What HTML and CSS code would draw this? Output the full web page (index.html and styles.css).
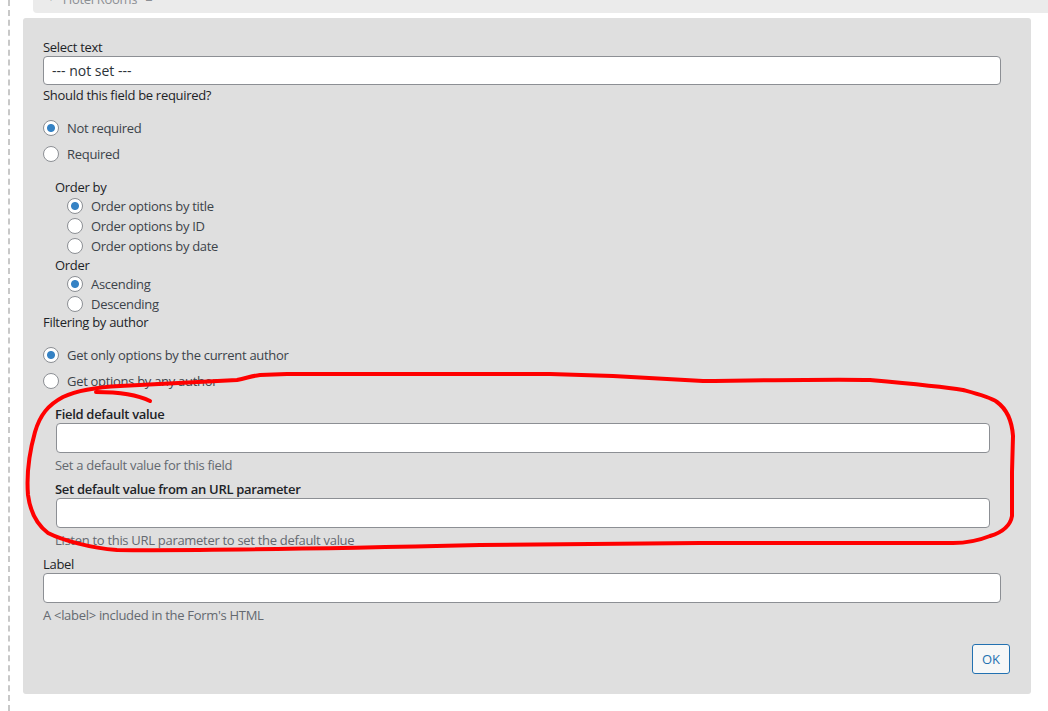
FILE: index.html
```html
<!DOCTYPE html>
<html lang="en">
<head>
    <meta charset="UTF-8">
    <meta name="viewport" content="width=device-width, initial-scale=1.0">
    <title>Hotel Rooms - field settings</title>
    <link rel="stylesheet" href="styles.css">
</head>
<body>

<div class="layout">
    <!-- Collapsed field header -->
    <div class="field-bar">
        <span class="field-bar-arrow">&#9660;</span>
        <span class="field-bar-title">Hotel Rooms</span>
        <span class="field-bar-handle">&#61;</span>
    </div>

    <!-- Field options panel -->
    <div class="panel">
        <div class="fields">
            <label class="label" for="selectText">Select text</label>
            <select class="input select" id="selectText">
                <option>--- not set ---</option>
            </select>

            <div class="label label-tight">Should this field be required?</div>
            <div class="radio-list">
                <label class="radio-row"><input type="radio" name="required" checked> Not required</label>
                <label class="radio-row"><input type="radio" name="required"> Required</label>
            </div>

            <div class="sub-block">
                <div class="label">Order by</div>
                <div class="radio-list compact">
                    <label class="radio-row"><input type="radio" name="orderBy" checked> Order options by title</label>
                    <label class="radio-row"><input type="radio" name="orderBy"> Order options by ID</label>
                    <label class="radio-row"><input type="radio" name="orderBy"> Order options by date</label>
                </div>
                <div class="label">Order</div>
                <div class="radio-list compact">
                    <label class="radio-row"><input type="radio" name="order" checked> Ascending</label>
                    <label class="radio-row"><input type="radio" name="order"> Descending</label>
                </div>
            </div>

            <div class="label">Filtering by author</div>
            <div class="radio-list">
                <label class="radio-row"><input type="radio" name="author" checked> Get only options by the current author</label>
                <label class="radio-row"><input type="radio" name="author"> Get options by any author</label>
            </div>

            <div class="sub-block defaults">
                <label class="label strong" for="defaultValue">Field default value</label>
                <input class="input" type="text" id="defaultValue">
                <div class="help">Set a default value for this field</div>

                <label class="label strong" for="urlParam">Set default value from an URL parameter</label>
                <input class="input" type="text" id="urlParam">
                <div class="help">Listen to this URL parameter to set the default value</div>
            </div>

            <label class="label" for="fieldLabel">Label</label>
            <input class="input" type="text" id="fieldLabel">
            <div class="help">A &lt;label&gt; included in the Form's HTML</div>
        </div>

        <div class="panel-footer">
            <button class="ok-btn">OK</button>
        </div>
    </div>

    <!-- hand-drawn highlight around the default value settings -->
    <svg class="scribble" width="1048" height="711" viewBox="0 0 1048 711">
        <path d="M150 401 C 138 395 118 392 96 392"/>
        <path d="M287 374 L 550 374 L 613 376 L 703 381 C 780 380 840 379 870 380 C 915 384 945 387 963 390 C 978 394 990 397 997 402 C 1008 410 1012 422 1013 436 L 1012 472 L 1012 516 C 1010 528 1000 533 990 536 C 980 540 965 543 953 543 L 870 543 L 700 543 L 480 545 C 350 548 200 551 117 550 C 90 548 62 540 48 533 C 36 524 30 510 28 495 C 26 470 30 450 35 432 C 40 415 48 405 63 397 C 78 390 100 387 120 386 C 160 384 200 382 237 380 C 247 378 252 376 260 375 L 287 374"/>
    </svg>
</div>

</body>
</html>
```

FILE: styles.css
```css
/* Page base */
body {
    font-family: "Open Sans", "Noto Sans", Arial, sans-serif;
    font-size: 13px;
    line-height: 18px;
    letter-spacing: -0.3px;
    color: #1d2327;
    margin: 0;
    padding: 0;
    background-color: #fff;
}

.layout {
    position: relative;
    margin-left: 8px;
    min-height: 100vh;
    border-left: 2px dashed #c8c8c8;
    overflow: hidden;
}

/* Collapsed field header, scrolled mostly out of view */
.field-bar {
    display: flex;
    align-items: flex-end;
    gap: 8px;
    height: 30px;
    margin-top: -17px;
    margin-left: 23px;
    padding-left: 14px;
    background-color: #ebebeb;
    border-bottom-left-radius: 4px;
    color: #8c8f94;
    font-size: 13px;
    line-height: 20px;
}

.field-bar-arrow {
    font-size: 8px;
    padding-bottom: 5px;
}

.field-bar-title {
    padding-bottom: 4px;
}

.field-bar-handle {
    padding-bottom: 4px;
}

/* Options panel */
.panel {
    width: 1008px;
    box-sizing: border-box;
    margin-top: 5px;
    margin-left: 13px;
    padding: 20px 21px 20px 20px;
    background-color: #dfdfdf;
    border-radius: 3px;
}

.fields {
    padding-right: 9px;
}

.label {
    display: block;
    color: #1d2327;
}

.label.strong {
    font-weight: 600;
}

.label-tight {
    margin-top: 1px;
}

.input {
    display: block;
    width: 100%;
    height: 30px;
    margin-top: 0;
    padding: 0 8px;
    box-sizing: border-box;
    border: 1px solid #8c8f94;
    border-radius: 4px;
    background-color: #fff;
    font-family: inherit;
    font-size: 13px;
    letter-spacing: inherit;
    color: #2c3338;
}

.select {
    appearance: none;
    -webkit-appearance: none;
    height: 29px;
    font-size: 14px;
    letter-spacing: 0;
}

/* Radio lists */
.radio-list {
    margin: 11px 0 10px;
}

.radio-list.compact {
    margin: 0 0 0 12px;
}

.radio-row {
    display: flex;
    align-items: center;
    gap: 8px;
    height: 26px;
    color: #3c434a;
}

.radio-list.compact .radio-row {
    height: 20px;
}

.radio-row input {
    appearance: none;
    -webkit-appearance: none;
    width: 16px;
    height: 16px;
    margin: 0;
    border: 1px solid #8c8f94;
    border-radius: 50%;
    background-color: #fff;
    flex-shrink: 0;
}

.radio-row input:checked {
    background: radial-gradient(circle, #3582c4 0 3.5px, #fff 4.5px);
}

.sub-block {
    margin: 11px 0 -1px 12px;
}

.sub-block.defaults {
    margin: 11px 11px 6px 12px;
}

.sub-block.defaults .input {
    margin-left: 1px;
    width: calc(100% - 1px);
}

.help {
    margin-top: 3px;
    margin-bottom: 6px;
    color: #646970;
}

/* Footer with the OK button */
.panel-footer {
    display: flex;
    justify-content: flex-end;
    margin-top: 20px;
}

.ok-btn {
    height: 30px;
    padding: 0 9px;
    border: 1px solid #2271b1;
    border-radius: 3px;
    background-color: #f6f7f7;
    color: #2271b1;
    font-family: inherit;
    font-size: 13px;
    cursor: pointer;
}

/* Red marker scribble drawn on top */
.scribble {
    position: absolute;
    left: -10px;
    top: 0;
    pointer-events: none;
}

.scribble path {
    fill: none;
    stroke: #ff0000;
    stroke-width: 4;
    stroke-linecap: round;
    stroke-linejoin: round;
}
```
